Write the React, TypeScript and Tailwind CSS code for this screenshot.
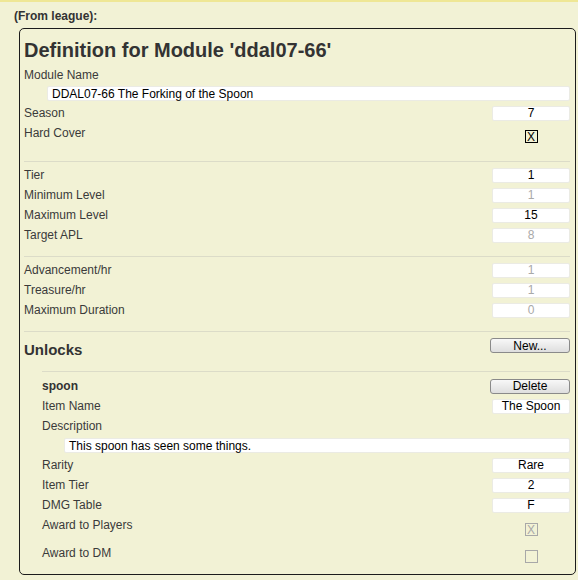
const basics = [
  { label: "Tier", value: "1" },
  { label: "Minimum Level", value: "1", disabled: true },
  { label: "Maximum Level", value: "15" },
  { label: "Target APL", value: "8", disabled: true },
];

const rates = [
  { label: "Advancement/hr", value: "1", disabled: true },
  { label: "Treasure/hr", value: "1", disabled: true },
  { label: "Maximum Duration", value: "0", disabled: true },
];

const itemFields = [
  { label: "Rarity", value: "Rare" },
  { label: "Item Tier", value: "2" },
  { label: "DMG Table", value: "F" },
];

function Field({ value, disabled }: { value: string; disabled?: boolean }) {
  return (
    <div
      className={`w-[78px] h-[15px] bg-white border border-[#ebebe4] rounded-[2px] flex items-center justify-center leading-none ${
        disabled ? "text-[#a9a9a9]" : "text-black"
      }`}
    >
      {value}
    </div>
  );
}

function Row({
  label,
  value,
  disabled,
}: {
  label: string;
  value: string;
  disabled?: boolean;
}) {
  return (
    <div className="h-5 flex items-center justify-between">
      <span>{label}</span>
      <Field value={value} disabled={disabled} />
    </div>
  );
}

function Check({ checked, disabled }: { checked?: boolean; disabled?: boolean }) {
  return (
    <div className="w-[78px] flex justify-center">
      <span
        className={`w-[13px] h-[13px] border flex items-center justify-center text-[12px] leading-none ${
          disabled ? "border-[#a8a8a8] text-[#a8a8a8]" : "border-black text-black"
        }`}
      >
        {checked ? "X" : ""}
      </span>
    </div>
  );
}

function CheckRow({
  label,
  checked,
  disabled,
  offset,
}: {
  label: string;
  checked?: boolean;
  disabled?: boolean;
  offset: string;
}) {
  return (
    <div className="h-[28px] flex items-start justify-between">
      <span className="h-5 leading-5">{label}</span>
      <div className={offset}>
        <Check checked={checked} disabled={disabled} />
      </div>
    </div>
  );
}

function Button({ text }: { text: string }) {
  return (
    <div className="w-[80px] h-[15px] border border-[#8a8a8a] rounded-[3px] bg-gradient-to-b from-[#f8f8f8] to-[#dedede] flex items-center justify-center text-black leading-none">
      {text}
    </div>
  );
}

function Divider() {
  return <div className="h-px bg-[#dcdcc8]" />;
}

export default function App() {
  return (
    <div className="min-h-[580px] bg-[#f2f2d5] border-t-2 border-[#efe795] font-['Liberation_Sans',Arial,sans-serif] text-[12px] text-[#3a3a3a]">
      <div className="h-[26px] pt-[2px] pl-[14px] flex items-center font-bold text-[#333]">
        (From league):
      </div>

      <div className="ml-[19px] w-[557px] border border-[#1c1c1c] rounded-[5px] pl-[4px] pr-[5px] pt-[9px] pb-[3px]">
        <h1 className="h-6 leading-6 text-[20px] font-bold text-[#333]">
          Definition for Module 'ddal07-66'
        </h1>

        <div className="mt-[3px] h-5 leading-5">Module Name</div>
        <div className="mt-px ml-[23px] h-[15px] bg-white border border-[#ebebe4] rounded-[2px] pl-[4px] flex items-center text-black leading-none">
          DDAL07-66 The Forking of the Spoon
        </div>
        <div className="mt-[2px]">
          <Row label="Season" value="7" />
        </div>
        <CheckRow label="Hard Cover" checked offset="mt-[7px]" />

        <div className="mt-[10px]">
          <Divider />
        </div>
        <div className="mt-[3px]">
          {basics.map((r) => (
            <Row key={r.label} {...r} />
          ))}
        </div>

        <div className="mt-[11px]">
          <Divider />
        </div>
        <div className="mt-[3px]">
          {rates.map((r) => (
            <Row key={r.label} {...r} />
          ))}
        </div>

        <div className="mt-[11px]">
          <Divider />
        </div>
        <div className="h-[27px] flex items-start justify-between">
          <h2 className="pt-[9px] text-[15px] leading-[18px] font-bold text-[#333]">
            Unlocks
          </h2>
          <div className="mt-[6px]">
            <Button text="New..." />
          </div>
        </div>

        <div className="ml-[18px] mt-[12px]">
          <Divider />
          <div className="mt-[4px] h-5 flex items-center justify-between">
            <span className="font-bold text-[#333]">spoon</span>
            <Button text="Delete" />
          </div>
          <Row label="Item Name" value="The Spoon" />
          <div className="h-5 leading-5">Description</div>
          <div className="mt-[2px] ml-[22px] h-[15px] bg-white border border-[#ebebe4] rounded-[2px] pl-[4px] flex items-center text-black leading-none">
            This spoon has seen some things.
          </div>
          <div className="mt-[2px]">
            {itemFields.map((r) => (
              <Row key={r.label} {...r} />
            ))}
          </div>
          <CheckRow label="Award to Players" checked disabled offset="mt-[8px]" />
          <CheckRow label="Award to DM" disabled offset="mt-[7px]" />
        </div>
      </div>
    </div>
  );
}
